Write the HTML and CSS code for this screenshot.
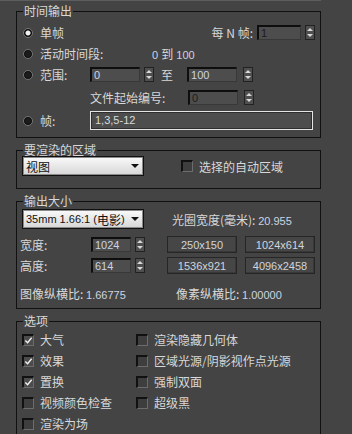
FILE: index.html
```html
<!DOCTYPE html>
<html lang="zh-CN">
<head>
    <meta charset="UTF-8">
    <meta name="viewport" content="width=device-width, initial-scale=1.0">
    <title>公用参数</title>
    <link rel="stylesheet" href="styles.css">
</head>
<body>
    <div class="panel">
        <fieldset class="group time-group">
            <legend>时间输出</legend>
            <div class="row">
                <span class="radio checked"></span>
                <span class="radio-text">单帧</span>
                <span class="push">每 N 帧:</span>
                <span class="field field-n disabled">1</span>
                <span class="spinner"><i class="up"></i><i class="down"></i></span>
            </div>
            <div class="row">
                <span class="radio"></span>
                <span class="radio-text range-label">活动时间段:</span>
                <span class="value">0 <span class="cjk">到</span> 100</span>
            </div>
            <div class="row">
                <span class="radio"></span>
                <span class="radio-text label-col">范围:</span>
                <span class="field field-range">0</span>
                <span class="spinner"><i class="up"></i><i class="down"></i></span>
                <span class="to">至</span>
                <span class="field field-range">100</span>
                <span class="spinner spinner-wide"><i class="up"></i><i class="down"></i></span>
            </div>
            <div class="row row-gap">
                <span class="indent"></span>
                <span class="file-label">文件起始编号:</span>
                <span class="field field-range disabled">0</span>
                <span class="spinner spinner-wide"><i class="up"></i><i class="down"></i></span>
            </div>
            <div class="row row-gap">
                <span class="radio"></span>
                <span class="radio-text label-col">帧:</span>
                <span class="field field-frames">1,3,5-12</span>
            </div>
        </fieldset>

        <fieldset class="group area-group">
            <legend>要渲染的区域</legend>
            <div class="row area-row">
                <span class="dropdown">视图<i class="arrow"></i></span>
                <span class="check auto-check"></span>
                <span class="check-text">选择的自动区域</span>
            </div>
        </fieldset>

        <fieldset class="group size-group">
            <legend>输出大小</legend>
            <div class="row size-top">
                <span class="dropdown"><span class="num-dark">35mm 1.66:1 (</span>电影<span class="num-dark">)</span><i class="arrow"></i></span>
                <span class="aperture">光圈宽度(毫米): <span class="value">20.955</span></span>
            </div>
            <div class="row size-row">
                <span class="size-label">宽度:</span>
                <span class="field field-size">1024</span>
                <span class="spinner"><i class="up"></i><i class="down"></i></span>
                <span class="preset first">250x150</span>
                <span class="preset">1024x614</span>
            </div>
            <div class="row size-row size-row2">
                <span class="size-label">高度:</span>
                <span class="field field-size">614</span>
                <span class="spinner"><i class="up"></i><i class="down"></i></span>
                <span class="preset first">1536x921</span>
                <span class="preset">4096x2458</span>
            </div>
            <div class="row aspect-row">
                <span class="aspect-label">图像纵横比: <span class="value">1.66775</span></span>
                <span class="pixel-label">像素纵横比: <span class="value">1.00000</span></span>
            </div>
        </fieldset>

        <fieldset class="group options-group">
            <legend>选项</legend>
            <div class="options">
                <div class="opt"><span class="check on"><svg viewBox="0 0 10 10"><polyline points="1.5,5 4,7.5 8.5,2" /></svg></span>大气</div>
                <div class="opt"><span class="check"></span>渲染隐藏几何体</div>
                <div class="opt"><span class="check on"><svg viewBox="0 0 10 10"><polyline points="1.5,5 4,7.5 8.5,2" /></svg></span>效果</div>
                <div class="opt"><span class="check"></span>区域光源/阴影视作点光源</div>
                <div class="opt"><span class="check on"><svg viewBox="0 0 10 10"><polyline points="1.5,5 4,7.5 8.5,2" /></svg></span>置换</div>
                <div class="opt"><span class="check"></span>强制双面</div>
                <div class="opt"><span class="check"></span>视频颜色检查</div>
                <div class="opt"><span class="check"></span>超级黑</div>
                <div class="opt"><span class="check"></span>渲染为场</div>
            </div>
        </fieldset>
    </div>
</body>
</html>
```

FILE: styles.css
```css
body {
    margin: 0;
    background: #444444;
    color: #d8d8d8;
    font-family: "Noto Sans CJK SC", "Noto Sans", sans-serif;
    font-size: 12px;
    height: 434px;
    overflow: hidden;
}

.panel {
    border-top: 1px solid #5e5e5e;
    padding: 3px 0 0 16px;
    width: 305px;
}

.group {
    margin: 5px 0 0;
    padding: 0 5px 0 6px;
    border: 1px solid #111;
    min-width: 0;
}

.time-group {
    margin-top: 0;
    padding-top: 4px;
    padding-bottom: 6px;
}

legend {
    padding: 0 1px;
    line-height: 14px;
    height: 14px;
}

.row {
    display: flex;
    align-items: center;
    height: 21px;
    white-space: nowrap;
}

.row-gap {
    margin-top: 2px;
}

/* radios */
.radio {
    width: 8px;
    height: 8px;
    border-radius: 50%;
    border: 1px solid #767676;
    background: #1c1c1c;
    box-shadow: inset 0 0 0 1px #0c0c0c;
    flex: none;
}

.radio.checked {
    background: radial-gradient(circle, #f2f2f2 0 2px, #1c1c1c 3px);
}

.radio-text {
    margin-left: 7px;
}

.label-col {
    width: 50px;
}

.range-label {
    width: 112px;
}

.indent {
    width: 67px;
    flex: none;
}

.file-label {
    width: 98px;
}

.push {
    margin-left: auto;
    margin-right: 4px;
}

.to {
    margin: 0 14px 0 7px;
}

/* numeric text */
.value,
.field,
.preset {
    font-family: "Liberation Sans", Arial, sans-serif;
    font-size: 11px;
    color: #cbd4e2;
}

.value .cjk {
    font-family: "Noto Sans CJK SC", sans-serif;
    font-size: 12px;
    color: #d8d8d8;
}

.field {
    box-sizing: border-box;
    height: 15px;
    line-height: 12px;
    padding-left: 2px;
    background: #4d4d4d;
    border-top: 2px solid #0e0e0e;
    border-left: 2px solid #0e0e0e;
    border-right: 1px solid #383838;
    border-bottom: 1px solid #383838;
    flex: none;
}

.field.disabled {
    color: #1c1c1c;
}

.field-n {
    width: 44px;
}

.field-range {
    width: 50px;
}

.field-size {
    width: 40px;
}

.field-frames {
    width: 223px;
    height: 19px;
    line-height: 16px;
    border: 1px solid #e4e4e4;
    box-shadow: inset 0 0 0 1px #2e2e2e;
    padding-left: 4px;
    color: #dadada;
}

/* spinners */
.spinner {
    box-sizing: border-box;
    width: 10px;
    height: 15px;
    margin-left: 4px;
    background: #4f4f4f;
    border: 1px solid #222;
    display: flex;
    flex-direction: column;
    align-items: center;
    justify-content: space-around;
    flex: none;
}

.spinner-wide {
    margin-left: 6px;
}

.spinner i {
    width: 0;
    height: 0;
    border-left: 3px solid transparent;
    border-right: 3px solid transparent;
}

.spinner .up {
    border-bottom: 3px solid #d8d8d8;
}

.spinner .down {
    border-top: 3px solid #d8d8d8;
}

/* dropdowns */
.dropdown {
    box-sizing: border-box;
    width: 122px;
    height: 20px;
    margin-left: -1px;
    padding-left: 3px;
    display: flex;
    align-items: center;
    color: #111;
    background: linear-gradient(#fafafa, #d6d6d6);
    border: 1px solid #101010;
    box-shadow: inset 0 0 0 1px #8a8a8a;
    white-space: pre;
    flex: none;
}

.dropdown .num-dark {
    font-family: "Liberation Sans", Arial, sans-serif;
    font-size: 11px;
}

.dropdown .arrow {
    margin-left: auto;
    margin-right: 4px;
    width: 0;
    height: 0;
    border-left: 4px solid transparent;
    border-right: 4px solid transparent;
    border-top: 4px solid #111;
}

.area-group {
    padding-bottom: 12px;
}

.area-row {
    height: 20px;
    margin-top: -1px;
}

/* checkboxes */
.check {
    box-sizing: border-box;
    width: 12px;
    height: 12px;
    background: #3e3e3e;
    border-top: 2px solid #111;
    border-left: 2px solid #111;
    border-right: 1px solid #6c6c6c;
    border-bottom: 1px solid #6c6c6c;
    display: flex;
    align-items: center;
    justify-content: center;
    flex: none;
}

.check.on {
    background: #4c4c4c;
}

.check svg {
    width: 9px;
    height: 9px;
    fill: none;
    stroke: #f4f4f4;
    stroke-width: 1.5;
}

.auto-check {
    margin-left: 37px;
}

.check-text {
    margin-left: 6px;
}

/* output size */
.size-group {
    padding-bottom: 6px;
}

.size-top {
    height: 20px;
    margin-top: 1px;
}

.aperture {
    margin-left: 28px;
}

.size-row {
    height: 17px;
    margin-top: 7px;
}

.size-row2 {
    margin-top: 4px;
}

.size-label {
    width: 71px;
    margin-left: -3px;
}

.preset {
    box-sizing: border-box;
    width: 70px;
    height: 17px;
    display: flex;
    align-items: center;
    justify-content: center;
    background: #464646;
    border: 1px solid #262626;
    box-shadow: inset -1px -1px 0 #383838;
    margin-left: 8px;
    color: #d0d4dc;
    flex: none;
}

.preset.first {
    margin-left: 22px;
}

.aspect-row {
    height: 17px;
    margin-top: 11px;
}

.aspect-label {
    margin-left: -3px;
    width: 156px;
}

/* options */
.options-group {
    padding-top: 1px;
    padding-bottom: 20px;
}

.options {
    display: grid;
    grid-template-columns: 114px 1fr;
    grid-auto-rows: 21px;
}

.opt {
    display: flex;
    align-items: center;
    gap: 6px;
    white-space: nowrap;
}

.opt .check {
    margin-left: -1px;
}
```
